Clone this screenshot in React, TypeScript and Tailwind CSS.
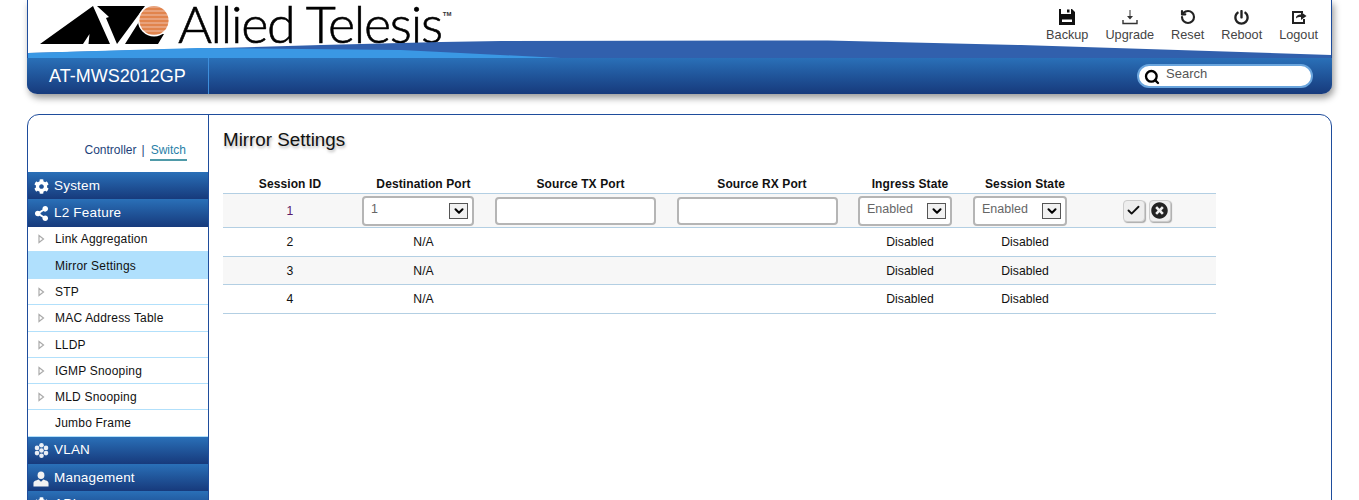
import type { ReactNode } from 'react';
import { Check, ChevronDown, Search, RotateCcw } from 'lucide-react';
import { FaCog, FaPowerOff, FaShareAlt, FaTimesCircle } from 'react-icons/fa';

const BackupIcon = () => (
    <svg width="16" height="16" viewBox="0 0 16 16">
        <path d="M0 0 H2 V5 H12 V0 H13 L16 3 V16 H0 Z" fill="#111" />
        <rect x="8" y="0.5" width="2.5" height="3" fill="#111" />
        <rect x="3" y="10.5" width="10" height="2.5" fill="#fff" />
    </svg>
);

const UpgradeIcon = () => (
    <svg width="16" height="16" viewBox="0 0 16 16" fill="none" stroke="#333">
        <path d="M8 1 V9" />
        <path d="M5 7 H11 L8 10.5 Z" fill="#333" stroke="none" />
        <path d="M1 11 V14.5 H15 V11" strokeWidth="1.4" />
    </svg>
);

const LogoutIcon = () => (
    <svg width="16" height="16" viewBox="0 0 16 16">
        <path d="M1 2 H12 V4 H3 V13 H12 V10 H14 V15 H1 Z" fill="#222" />
        <path d="M5 9.5 C5 6.5 7 5.5 10 5.5 V3 L15.5 7 L10 11 V8 C8 8 6 8 5 9.5 Z" fill="#222" />
    </svg>
);

const FlowerIcon = () => (
    <svg width="15" height="15" viewBox="0 0 15 15" fill="#fff" opacity="0.9">
        <circle cx="7.5" cy="7.5" r="2.3" />
        <circle cx="7.5" cy="2.3" r="2.3" />
        <circle cx="7.5" cy="12.7" r="2.3" />
        <circle cx="3" cy="4.9" r="2.3" />
        <circle cx="12" cy="4.9" r="2.3" />
        <circle cx="3" cy="10.1" r="2.3" />
        <circle cx="12" cy="10.1" r="2.3" />
    </svg>
);

const UserIcon = () => (
    <svg width="17" height="16" viewBox="0 0 17 16">
        <ellipse cx="8.5" cy="4" rx="3.6" ry="4" fill="#f2f2f2" />
        <path d="M0.5 16 V12.5 C0.5 10 3.5 9.5 6 8.5 L8.5 11 L11 8.5 C13.5 9.5 16.5 10 16.5 12.5 V16 Z" fill="#f2f2f2" />
    </svg>
);

const ArrowIcon = () => (
    <svg width="7" height="10" viewBox="0 0 7 10">
        <path d="M1 1.5 L5.5 5 L1 8.5 Z" fill="#fff" stroke="#aaa" strokeWidth="1.2" />
    </svg>
);

const tools = [
    { label: 'Backup', icon: <BackupIcon /> },
    { label: 'Upgrade', icon: <UpgradeIcon /> },
    { label: 'Reset', icon: <RotateCcw size={16} strokeWidth={3.2} className="text-[#222]" /> },
    { label: 'Reboot', icon: <FaPowerOff size={15} className="text-[#222]" /> },
    { label: 'Logout', icon: <LogoutIcon /> },
];

const subItems = [
    { label: 'Link Aggregation', arrow: true, h: 'h-[25px]' },
    { label: 'Mirror Settings', arrow: false, active: true, h: 'h-[27px] pt-[2px]' },
    { label: 'STP', arrow: true, h: 'h-[26px]' },
    { label: 'MAC Address Table', arrow: true, h: 'h-[27px]' },
    { label: 'LLDP', arrow: true, h: 'h-[26px]' },
    { label: 'IGMP Snooping', arrow: true, h: 'h-[26px]' },
    { label: 'MLD Snooping', arrow: true, h: 'h-[26px]' },
    { label: 'Jumbo Frame', arrow: false, h: 'h-[27px]' },
];

const gradient = 'bg-gradient-to-b from-[#2a70b8] to-[#173a7c]';

const Logo = () => (
    <div className="flex items-start h-[52px]">
        <svg width="130" height="44" viewBox="0 0 130 44" className="mt-[4px] shrink-0">
            <defs>
                <clipPath id="sun"><circle cx="114" cy="16.5" r="14.5" /></clipPath>
            </defs>
            <path d="M0 40 L53 2 L70 40 L48.5 40 L49.5 30 L43 40 Z" fill="#000" />
            <path d="M57 2 L105 2 L77 40 L66 14 L69 13 Z" fill="#000" />
            <path d="M102 13 L85 40 L118 40 L124 30 L108 30 Z" fill="#000" />
            <circle cx="114" cy="16.5" r="16" fill="#fff" />
            <g clipPath="url(#sun)">
                <rect x="99" y="2" width="30" height="29" fill="#e8a27c" />
                <path d="M99 5 H129 M99 9 H129 M99 13 H129 M99 17 H129 M99 21 H129 M99 25 H129 M99 29 H129" stroke="#d9661f" strokeWidth="1.2" />
            </g>
        </svg>
        <span className="text-[52px] leading-[49px] -mt-[1px] text-black font-light tracking-[-1.3px] [-webkit-text-stroke:0.6px_#000] font-['Lato',sans-serif] whitespace-nowrap ml-[8px]">Allied Telesis</span>
        <span className="text-[6px] leading-[8px] mt-[10px] ml-[1px] text-[#333] font-bold">TM</span>
    </div>
);

const NavHead = ({ icon, label, h = 'h-[27px]' }: { icon: ReactNode; label: string; h?: string }) => (
    <div className={`flex items-center ${h} pl-[5px] gap-[5px] ${gradient} text-white text-[13.5px] tracking-[0.2px]`}>
        <span className="w-[16px] flex justify-center">{icon}</span>
        {label}
    </div>
);

const Select = ({ value, w }: { value: string; w: string }) => (
    <div className={`${w} h-[30px] bg-white border-[2px] border-[#b5b5b5] rounded-[4px] flex items-center justify-between pl-[7px] pr-[4px] text-[12.5px] text-[#666]`}>
        <span className="-mt-[2px]">{value}</span>
        <span className="w-[19px] h-[16px] border border-[#555] bg-[#f1f1f1] flex items-center justify-center">
            <ChevronDown size={14} strokeWidth={3.5} className="text-black" />
        </span>
    </div>
);

const cols = 'grid grid-cols-[134px_133px_181px_182px_114px_116px_133px] items-center text-center';

const rows = [
    { n: '2', h: 'h-[29px]' },
    { n: '3', h: 'h-[28px] pt-[1px] bg-[#f7f7f7]' },
    { n: '4', h: 'h-[29px]' },
];

export default function App() {
    return (
        <div className="h-[500px] overflow-hidden bg-white font-['Liberation_Sans',Arial,sans-serif] px-[27px]">
            <header className="relative h-[94px] border-x border-[#1f4d9c] rounded-b-[10px] shadow-[2px_4px_7px_rgba(0,0,0,0.4)]">
                <div className="pl-[12px] h-[58px]"><Logo /></div>
                <svg className="absolute left-0 top-[38px]" width="1303" height="20" viewBox="0 0 1303 20" preserveAspectRatio="none">
                    <path d="M0 15 L193 10 L293 7 L413 4 L473 3 L800 2.5 L993 7 L1303 17 V20 H0 Z" fill="#3160ad" />
                    <path d="M0 15 L170 10 L373 12 L533 20 H0 Z" fill="#3a98e4" />
                </svg>
                <div className="absolute right-[13px] top-[9px] flex gap-[17px] text-[12.7px] text-[#444]">
                    {tools.map(({ label, icon }) => (
                        <div key={label} className="flex flex-col items-center">
                            <span className="h-[16px] flex items-center">{icon}</span>
                            <span className="mt-[2px] leading-[16px]">{label}</span>
                        </div>
                    ))}
                </div>
                <div className={`absolute -left-px -right-px top-[58px] h-[36px] rounded-b-[10px] flex items-center ${gradient}`}>
                    <div className="w-[182px] h-full border-r border-[#3f8fdc] flex items-center pl-[22px] text-white text-[18px]">AT-MWS2012GP</div>
                    <div className="ml-auto mr-[19px] w-[176px] h-[24px] rounded-full bg-white border-[2px] border-[#6aa5dd] flex items-center pl-[5px] text-[13px] text-[#555]">
                        <Search size={16} strokeWidth={3.5} className="text-black mt-[2px]" />
                        <span className="ml-[6px] -mt-[4px]">Search</span>
                    </div>
                </div>
            </header>

            <main className="mt-[20px] h-[400px] border border-[#1f4d9c] rounded-t-[12px] flex">
                <aside className="w-[181px] shrink-0 border-r border-[#1f4d9c]">
                    <div className="h-[57px] flex justify-end items-start pt-[27px] pr-[21px] text-[12px] text-[#1d3f7a] leading-[16px]">
                        Controller
                        <span className="mx-[5px]">|</span>
                        <span className="text-[#2a7fa8] border-b-[2px] border-[#4f9aa8] h-[19px] px-px">Switch</span>
                    </div>
                    <NavHead label="System" icon={<FaCog size={15} />} h="h-[27px] pt-[2px]" />
                    <NavHead label="L2 Feature" icon={<FaShareAlt size={15} />} h="h-[28px] pt-[1px]" />
                    {subItems.map((s) => (
                        <div key={s.label} className={`${s.h} flex items-center text-[12px] text-[#111] tracking-[0.2px] pl-[10px] border-b border-[#b2e0fb] ${s.active ? 'bg-[#b0e0fd]' : ''}`}>
                            <span className="w-[17px]">{s.arrow && <ArrowIcon />}</span>
                            {s.label}
                        </div>
                    ))}
                    <NavHead label="VLAN" icon={<FlowerIcon />} />
                    <NavHead label="Management" icon={<UserIcon />} h="h-[27px] pt-[2px]" />
                    <NavHead label="API" icon={<FaCog size={15} />} />
                </aside>
                <section className="flex-1 pl-[14px] pt-[13px]">
                    <h1 className="text-[18.8px] leading-[24px] text-[#111] [text-shadow:1px_2px_3px_rgba(0,0,0,0.3)]">Mirror Settings</h1>
                    <div className="mt-[22px] w-[993px] text-[12.2px] text-[#111]">
                        <div className={`${cols} h-[20px] font-bold text-[12px] tracking-[0.1px] border-b border-[#b3cfe3]`}>
                            <span>Session ID</span><span>Destination Port</span><span>Source TX Port</span><span>Source RX Port</span><span>Ingress State</span><span>Session State</span><span />
                        </div>
                        <div className={`${cols} h-[34px] bg-[#f7f7f7] border-b border-[#b3cfe3]`}>
                            <span className="text-[#5a1a6a] pt-[2px]">1</span>
                            <div className="flex justify-center pr-[11px]"><Select value="1" w="w-[112px]" /></div>
                            <div className="flex justify-center pr-[11px]"><div className="w-[161px] h-[28px] bg-white border-[2px] border-[#b5b5b5] rounded-[4px]" /></div>
                            <div className="flex justify-center pr-[9px]"><div className="w-[161px] h-[28px] bg-white border-[2px] border-[#b5b5b5] rounded-[4px]" /></div>
                            <div className="flex justify-center pr-[10px]"><Select value="Enabled" w="w-[94px]" /></div>
                            <div className="flex justify-center pr-[10px]"><Select value="Enabled" w="w-[94px]" /></div>
                            <div className="flex justify-center gap-[4px] pr-[6px]">
                                <span className="w-[22px] h-[22px] bg-[#eee] border border-[#ccc] rounded-[4px] shadow-[1px_1px_1px_#aaa] flex items-center justify-center"><Check size={15} strokeWidth={3} /></span>
                                <span className="w-[22px] h-[22px] bg-[#eee] border border-[#ccc] rounded-[4px] shadow-[1px_1px_1px_#aaa] flex items-center justify-center"><FaTimesCircle size={17} className="text-[#222]" /></span>
                            </div>
                        </div>
                        {rows.map(({ n, h }) => (
                            <div key={n} className={`${cols} ${h} border-b border-[#b3cfe3]`}>
                                <span>{n}</span><span>N/A</span><span /><span /><span>Disabled</span><span>Disabled</span><span />
                            </div>
                        ))}
                    </div>
                </section>
            </main>
        </div>
    );
}
